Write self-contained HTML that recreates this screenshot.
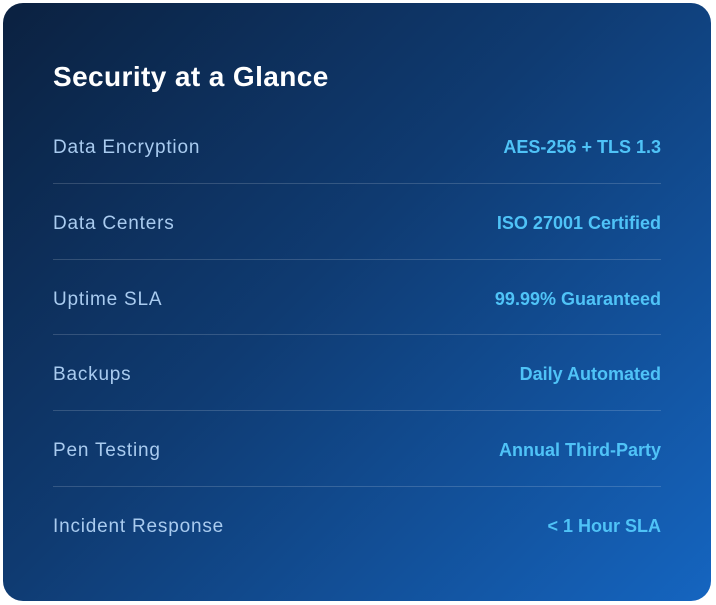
<!DOCTYPE html>
<html><head><style>
html,body{margin:0;padding:0;background:#fff;width:716px;height:605px;overflow:hidden}
.card{position:absolute;left:3px;top:3px;width:708px;height:598px;border-radius:20px;
background:linear-gradient(135deg,#0b2140 0%,#0f3b72 45%,#1565c0 100%);font-family:"Liberation Sans",sans-serif}
h1{position:absolute;left:50px;top:58px;margin:0;font-size:28px;line-height:32px;color:#fff;font-weight:bold;letter-spacing:0.4px}
.rows{position:absolute;left:50px;top:105px;width:608px}
.row{height:75.8px;box-sizing:border-box;padding-top:28px;display:flex;justify-content:space-between;align-items:baseline;border-bottom:1px solid rgba(255,255,255,0.16);font-size:18px;line-height:22px}
.row:last-child{border-bottom:none}
.l{color:#a9cbef;font-size:19px;letter-spacing:0.8px}
.v{color:#4fc3f7;font-weight:bold}
</style></head><body>
<div class="card">
<h1>Security at a Glance</h1>
<div class="rows">
<div class="row"><span class="l">Data Encryption</span><span class="v">AES-256 + TLS 1.3</span></div>
<div class="row"><span class="l">Data Centers</span><span class="v">ISO 27001 Certified</span></div>
<div class="row"><span class="l">Uptime SLA</span><span class="v">99.99% Guaranteed</span></div>
<div class="row"><span class="l">Backups</span><span class="v">Daily Automated</span></div>
<div class="row"><span class="l">Pen Testing</span><span class="v">Annual Third-Party</span></div>
<div class="row"><span class="l">Incident Response</span><span class="v">&lt; 1 Hour SLA</span></div>
</div>
</div>
</body></html>
